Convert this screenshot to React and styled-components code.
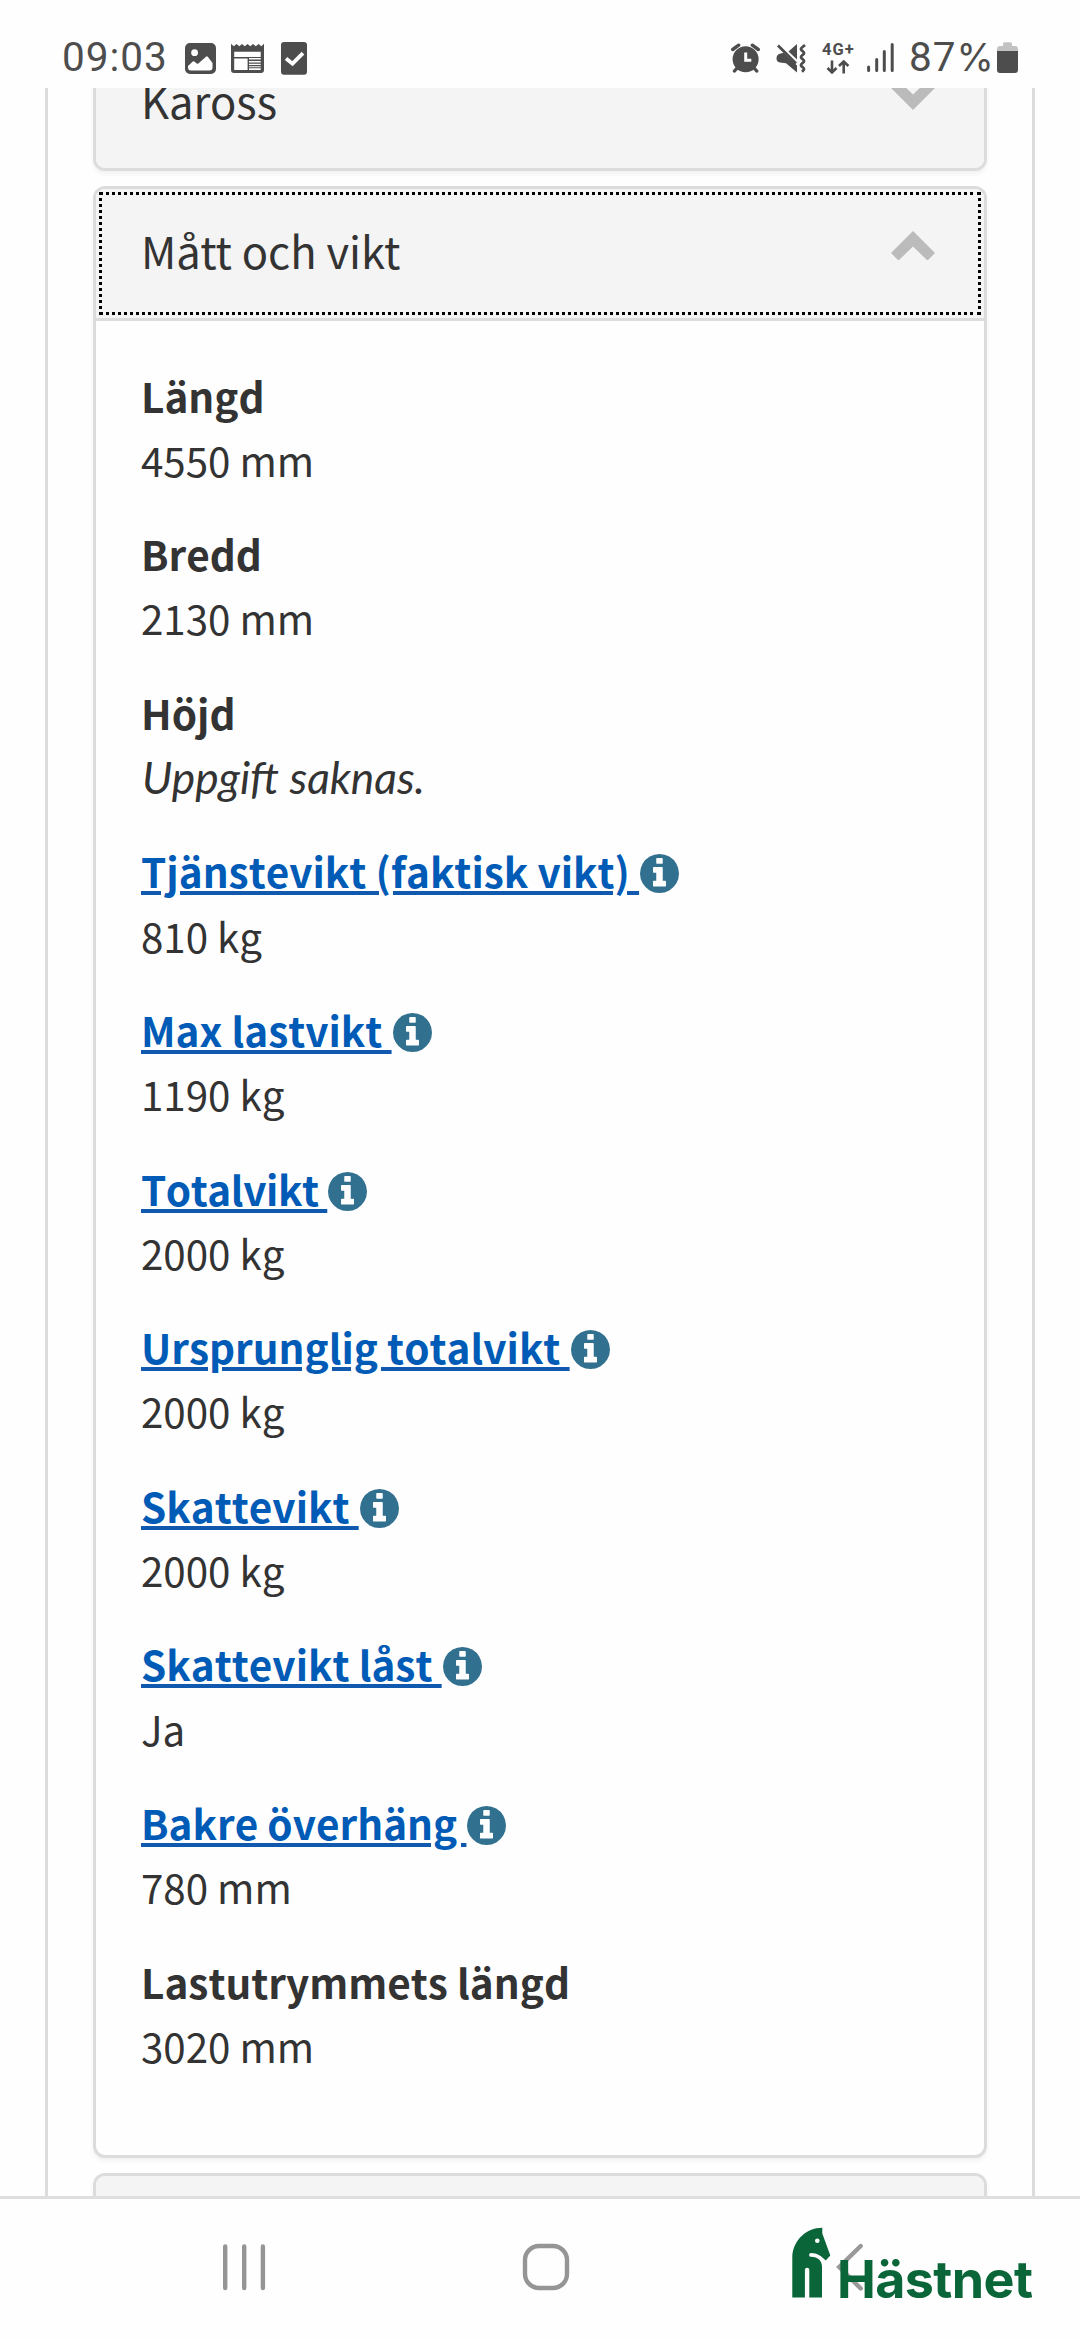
import React from 'react'
import styled, { createGlobalStyle } from 'styled-components'

const GlobalStyle = createGlobalStyle`
  body {
    margin: 0;
    background: #fefefe;
    color: #333;
    font-family: 'Noto Sans CJK SC', 'Noto Sans', sans-serif;
  }
`

const StyledScreen = styled.div`
  position: relative;
  display: flex;
  flex-direction: column;
  width: 1080px;
  height: 2340px;
  overflow: hidden;
  background: #fefefe;
`
const StyledStatusBar = styled.header`
  display: flex;
  flex: 0 0 88px;
  box-sizing: border-box;
  justify-content: space-between;
  align-items: flex-start;
  padding: 32px 62px 0 62px;
  color: #4d4d4d;
`
const StyledStatusGroup = styled.div`
  display: flex;
  align-items: flex-start;
  height: 50px;
`
const StyledStatusText = styled.span`
  width: ${({ $width }) => $width};
  font-size: 40.5px;
  font-family: Roboto, sans-serif;
  line-height: 50px;
  letter-spacing: 1px;
  white-space: nowrap;
`
const StyledPercent = styled.span`
  font-size: 38px;
  font-family: Inter, sans-serif;
  line-height: 1;
  letter-spacing: 0;
`
const StyledStatusIcon = styled.svg`
  display: block;
  flex: 0 0 auto;
  width: ${({ $width }) => $width}px;
  height: 50px;
  margin-left: ${({ $gap }) => $gap}px;
`
const StyledNetwork = styled.div`
  display: flex;
  flex-direction: column;
  width: 34px;
  margin-left: 16px;
  padding-top: 9px;
  font-weight: 700;
  font-size: 16.5px;
  font-family: Roboto, sans-serif;
  line-height: 17px;
  letter-spacing: 1px;
  white-space: nowrap;
`
const StyledArrows = styled.svg`
  display: block;
  width: 34px;
  height: 15px;
  margin-top: 2px;
`
const StyledViewport = styled.main`
  display: flex;
  flex: 1 1 0;
  flex-direction: column;
  min-height: 0;
  padding: 0 45px;
  overflow: hidden;
`
const StyledPanel = styled.div`
  display: flex;
  flex: 1 0 auto;
  flex-direction: column;
  gap: 15px;
  padding: 0 45px;
  border: solid #dcdcdc;
  border-width: 0 3px;

  > :first-child {
    margin-top: -52px;
  }
`
const StyledCard = styled.section`
  overflow: hidden;
  border: 3px solid #dcdcdc;
  border-radius: 12px;
  background: #fefefe;
  box-shadow: 0 3px 4px rgba(0, 0, 0, 0.05);
`
const StyledCardHeader = styled.div`
  display: flex;
  box-sizing: border-box;
  justify-content: space-between;
  align-items: flex-start;
  height: 129px;
  padding: 28px 49px 0 45px;
  background: #f4f4f4;
  outline: ${({ $focused }) => ($focused ? '3px dotted #000' : 'none')};
  outline-offset: -6px;
`
const StyledTitle = styled.h2`
  margin: 0;
  font-weight: 400;
  font-size: 43.5px;
  line-height: 67px;
  white-space: nowrap;
`
const StyledChevron = styled.svg`
  width: 44px;
  height: 29px;
  margin-top: 14px;
  transform: ${({ $open }) => ($open ? 'none' : 'scaleY(-1)')};
`
const StyledCardBody = styled.dl`
  display: flex;
  flex-direction: column;
  box-sizing: border-box;
  gap: 30px;
  height: 1837px;
  margin: 0;
  padding: 42.6px 45px 0;
  border-top: 3px solid #dcdcdc;
  font-size: 40.5px;
  font-kerning: none;
  line-height: 64.3px;
`
const StyledLabel = styled.dt`
  height: 64.3px;
  font-weight: 700;
  letter-spacing: ${({ $tight }) => ($tight ? '-0.45px' : '0')};
  white-space: nowrap;
`
const StyledLink = styled.span`
  color: #005bb7;
  text-decoration: underline;
  text-decoration-color: #1059ae;
  text-decoration-thickness: 4px;
  text-underline-offset: 3px;
  white-space: pre;
`
const StyledInfo = styled.svg`
  width: 39px;
  height: 39px;
  margin-left: 1px;
  vertical-align: -5px;
`
const StyledValue = styled.dd`
  height: 64.3px;
  margin: 0;
  font-size: 40.3px;
  white-space: nowrap;
`
const StyledMissing = styled.em`
  margin-left: 1px;
  font-style: italic;
  font-size: 44.3px;
  font-family: Lato, sans-serif;
  font-kerning: normal;
`
const StyledNavBar = styled.nav`
  display: flex;
  flex: 0 0 144px;
  box-sizing: border-box;
  align-items: flex-start;
  padding: 43px 0 0 220px;
  border-top: 3px solid #dfdfdf;
  background: #fefefe;
`
const StyledNavIcon = styled.svg`
  flex: 0 0 auto;
  width: 50px;
  height: 50px;
  margin-right: ${({ $gap }) => $gap}px;
`
/* Watermark that lies over the back button */
const StyledBrand = styled.div`
  position: absolute;
  right: 44px;
  bottom: 42px;
  display: flex;
  align-items: flex-end;
  width: 244px;
  height: 71px;
  color: #0a6638;
`
const StyledHorse = styled.svg`
  flex: 0 0 auto;
  width: 40px;
  height: 71px;
`
const StyledBrandName = styled.span`
  margin: 0 0 -4px 5px;
  font-weight: 700;
  font-size: 52px;
  font-family: Inter, sans-serif;
  line-height: 44px;
  letter-spacing: -0.6px;
  white-space: nowrap;
`

const rows = [
  { label: 'Längd', value: '4550 mm' },
  { label: 'Bredd', value: '2130 mm' },
  { label: 'Höjd' },
  { label: 'Tjänstevikt (faktisk vikt)', value: '810 kg', info: true },
  { label: 'Max lastvikt', value: '1190 kg', info: true },
  { label: 'Totalvikt', value: '2000 kg', info: true, tight: true },
  { label: 'Ursprunglig totalvikt', value: '2000 kg', info: true },
  { label: 'Skattevikt', value: '2000 kg', info: true },
  { label: 'Skattevikt låst', value: 'Ja', info: true },
  { label: 'Bakre överhäng', value: '780 mm', info: true },
  { label: 'Lastutrymmets längd', value: '3020 mm' },
]

const Chevron = ({ open = false }) => (
  <StyledChevron $open={open} viewBox="0 0 44 29">
    <path d="M22 0l22 22-7.5 7.5L22 15.5 7.5 29.5 0 22z" fill="#bbb" />
  </StyledChevron>
)

const InfoIcon = () => (
  <StyledInfo viewBox="128 128 1536 1536">
    <path
      fill="#31708f"
      d="M1152 1376v-160q0-14-9-23t-23-9h-96V672q0-14-9-23t-23-9H672q-14 0-23 9t-9 23v160q0 14 9 23t23 9h96v320h-96q-14 0-23 9t-9 23v160q0 14 9 23t23 9h448q14 0 23-9t9-23zm-128-896V320q0-14-9-23t-23-9H800q-14 0-23 9t-9 23v160q0 14 9 23t23 9h192q14 0 23-9t9-23zm640 416q0 209-103 385.5T1281.500 1561 896 1664t-385.500-103T231 1281.500 128 896t103-385.500T510.500 231 896 128t385.500 103T1561 510.500 1664 896z"
    />
  </StyledInfo>
)

const StatusBar = () => (
  <StyledStatusBar>
    <StyledStatusGroup>
      <StyledStatusText $width="123px">09:03</StyledStatusText>
      <StyledStatusIcon $width={31} $gap={0} viewBox="185 32 31 50">
        <path
          fill="#4d4d4d"
          fillRule="evenodd"
          d="M190 43h21a5 5 0 0 1 5 5v21a5 5 0 0 1-5 5h-21a5 5 0 0 1-5-5V48a5 5 0 0 1 5-5zM188 66v1.500q0 3 3 3h18.500q3 0 3-3V63l-4.700-6.200q-.8-1-1.800 0l-7.700 6.700q-.7.5-1.500 0l-2.500-2q-.8-.6-1.500 0zM194.600 49.300a3.400 3.400 0 1 0 0 6.800 3.400 3.400 0 0 0 0-6.800z"
        />
      </StyledStatusIcon>
      <StyledStatusIcon $width={33} $gap={15} viewBox="231 32 33 50">
        <path
          fill="#4d4d4d"
          d="M231 43.700l2.800 2.600 2.700-2.300 2.800 2.300 2.700-2.300 2.800 2.300 2.700-2.300 2.800 2.300 2.700-2.300 2.800 2.300 2.700-2.300 2.800 2.300 2.700-2.600V70a3 3 0 0 1-3 3h-27a3 3 0 0 1-3-3z"
        />
        <path
          fill="#fefefe"
          d="M234.200 51.700h26.500V57h-26.500zM234.200 58.500h13.400V70h-13.400zM249 58h11.700v1.500H249zM249 61h11.700v1.400H249zM249 63.700h11.700v1.300H249zM249 66.200h11.700v1H249zM249 68.300h11.700V70H249z"
        />
      </StyledStatusIcon>
      <StyledStatusIcon $width={26} $gap={17} viewBox="281 32 26 50">
        <rect x="281" y="42" width="26" height="32.700" rx="3" fill="#4d4d4d" />
        <path
          d="M286 58.500l6.500 5.200 10.500-10.500"
          fill="none"
          stroke="#fefefe"
          strokeWidth="3.800"
        />
      </StyledStatusIcon>
    </StyledStatusGroup>
    <StyledStatusGroup>
      <StyledStatusIcon $width={29} $gap={0} viewBox="731 32 29 50">
        <circle cx="745.600" cy="59.300" r="13" fill="#4d4d4d" />
        <path
          d="M732.700 49.500l6-4.300M758.300 49.500l-6-4.300M734.500 71l3.500-4M756.700 71l-3.500-4"
          fill="none"
          stroke="#4d4d4d"
          strokeWidth="3.400"
          strokeLinecap="round"
        />
        <path
          d="M745.700 52.500v7.700h5.600"
          fill="none"
          stroke="#fefefe"
          strokeWidth="3"
        />
      </StyledStatusIcon>
      <StyledStatusIcon $width={30} $gap={16} viewBox="776 32 30 50">
        <path
          fill="#4d4d4d"
          d="M779 54l4.500-1.300L797 65.500v7l-11-9.200-6-.8q-3.500-.5-3.500-4T779 54zM788.500 51.500l8.500-7.500v15.500z"
        />
        <path
          d="M778 45.500l18 18M805 45l-3 2.500q-2 1.600 0 3.200l1 .8q2 1.600 0 3.200l-1 .8q-2 1.600 0 3.200l1 .8q2 1.600 0 3.200l-1 .8q-2 1.600 0 3.200l1 .8q2 1.600 0 3.200l-1 1"
          fill="none"
          stroke="#4d4d4d"
          strokeWidth="2.800"
        />
      </StyledStatusIcon>
      <StyledNetwork>
        4G+
        <StyledArrows viewBox="822 60 34 15">
          <path
            d="M832 60.500v12M827.500 68l4.500 4.500 4.500-4.500M843.700 73.500V61.500M839 66l4.700-4.500 4.700 4.500"
            fill="none"
            stroke="#4d4d4d"
            strokeWidth="2.600"
          />
        </StyledArrows>
      </StyledNetwork>
      <StyledStatusIcon $width={27} $gap={11} viewBox="867 32 27 50">
        <path
          d="M868.600 67v3.500M876.700 59.500v11M884.300 51.500v19M892.200 44.500v26"
          fill="none"
          stroke="#4d4d4d"
          strokeWidth="3"
          strokeLinecap="round"
        />
      </StyledStatusIcon>
      <StyledStatusIcon $width={15} $gap={0} />
      <StyledStatusText $width="88px">
        87<StyledPercent>%</StyledPercent>
      </StyledStatusText>
      <StyledStatusIcon $width={21} $gap={0} viewBox="997 32 21 50">
        <path
          fill="#c2c2c2"
          d="M1003 46v-2q0-1.700 1.700-1.700h5.600q1.700 0 1.700 1.700v2h3q3 0 3 3v4h-21v-4q0-3 3-3z"
        />
        <path fill="#4d4d4d" d="M997 51h21v19q0 3-3 3h-15q-3 0-3-3z" />
      </StyledStatusIcon>
    </StyledStatusGroup>
  </StyledStatusBar>
)

const Row = ({ label, value, info, tight }) => (
  <div>
    <StyledLabel $tight={tight}>
      {info ? (
        <>
          <StyledLink>{`${label} `}</StyledLink>
          <InfoIcon />
        </>
      ) : (
        label
      )}
    </StyledLabel>
    <StyledValue>
      {value || <StyledMissing>Uppgift saknas.</StyledMissing>}
    </StyledValue>
  </div>
)

const NavBar = () => (
  <StyledNavBar>
    <StyledNavIcon $gap={251} viewBox="220 2242 50 50">
      <path
        d="M225.200 2246.500v41.500M244.200 2246.500v41.500M262.900 2246.500v41.500"
        stroke="#959595"
        strokeWidth="4.400"
        strokeLinecap="round"
      />
    </StyledNavIcon>
    <StyledNavIcon $gap={264} viewBox="521 2242 50 50">
      <rect
        x="525"
        y="2246"
        width="42"
        height="42"
        rx="14"
        fill="none"
        stroke="#959595"
        strokeWidth="4.400"
      />
    </StyledNavIcon>
    <StyledNavIcon $gap={0} viewBox="835 2242 50 50">
      <path
        d="M860.700 2246l-21.500 21 21.500 21.500"
        fill="none"
        stroke="#9a9898"
        strokeWidth="4.400"
        strokeLinecap="round"
      />
    </StyledNavIcon>
  </StyledNavBar>
)

const Brand = () => (
  <StyledBrand>
    <StyledHorse viewBox="0 0 40 71">
      <path
        fill="currentColor"
        fillRule="evenodd"
        d="M.3 70.500V31C.3 14 14 .8 30.300 .8V6.500l8 22-4.600 5C30 29.500 25 26 19 26a1.900 1.900 0 0 0 0 3.800c7 .2 11 4.200 11 9.700v31H17.300V43a2.200 2.200 0 0 0-4.400 0v27.500zM25.300 11.400a2.300 2.300 0 1 0 0 4.600 2.300 2.300 0 0 0 0-4.600z"
      />
    </StyledHorse>
    <StyledBrandName>Hästnet</StyledBrandName>
  </StyledBrand>
)

const App = () => (
  <StyledScreen>
    <GlobalStyle />
    <StatusBar />
    <StyledViewport>
      <StyledPanel>
        <StyledCard>
          <StyledCardHeader>
            <StyledTitle>Kaross</StyledTitle>
            <Chevron />
          </StyledCardHeader>
        </StyledCard>
        <StyledCard>
          <StyledCardHeader $focused>
            <StyledTitle>Mått och vikt</StyledTitle>
            <Chevron open />
          </StyledCardHeader>
          <StyledCardBody>
            {rows.map((row) => (
              <Row key={row.label} {...row} />
            ))}
          </StyledCardBody>
        </StyledCard>
        <StyledCard>
          <StyledCardHeader />
        </StyledCard>
      </StyledPanel>
    </StyledViewport>
    <NavBar />
    <Brand />
  </StyledScreen>
)

export default App
